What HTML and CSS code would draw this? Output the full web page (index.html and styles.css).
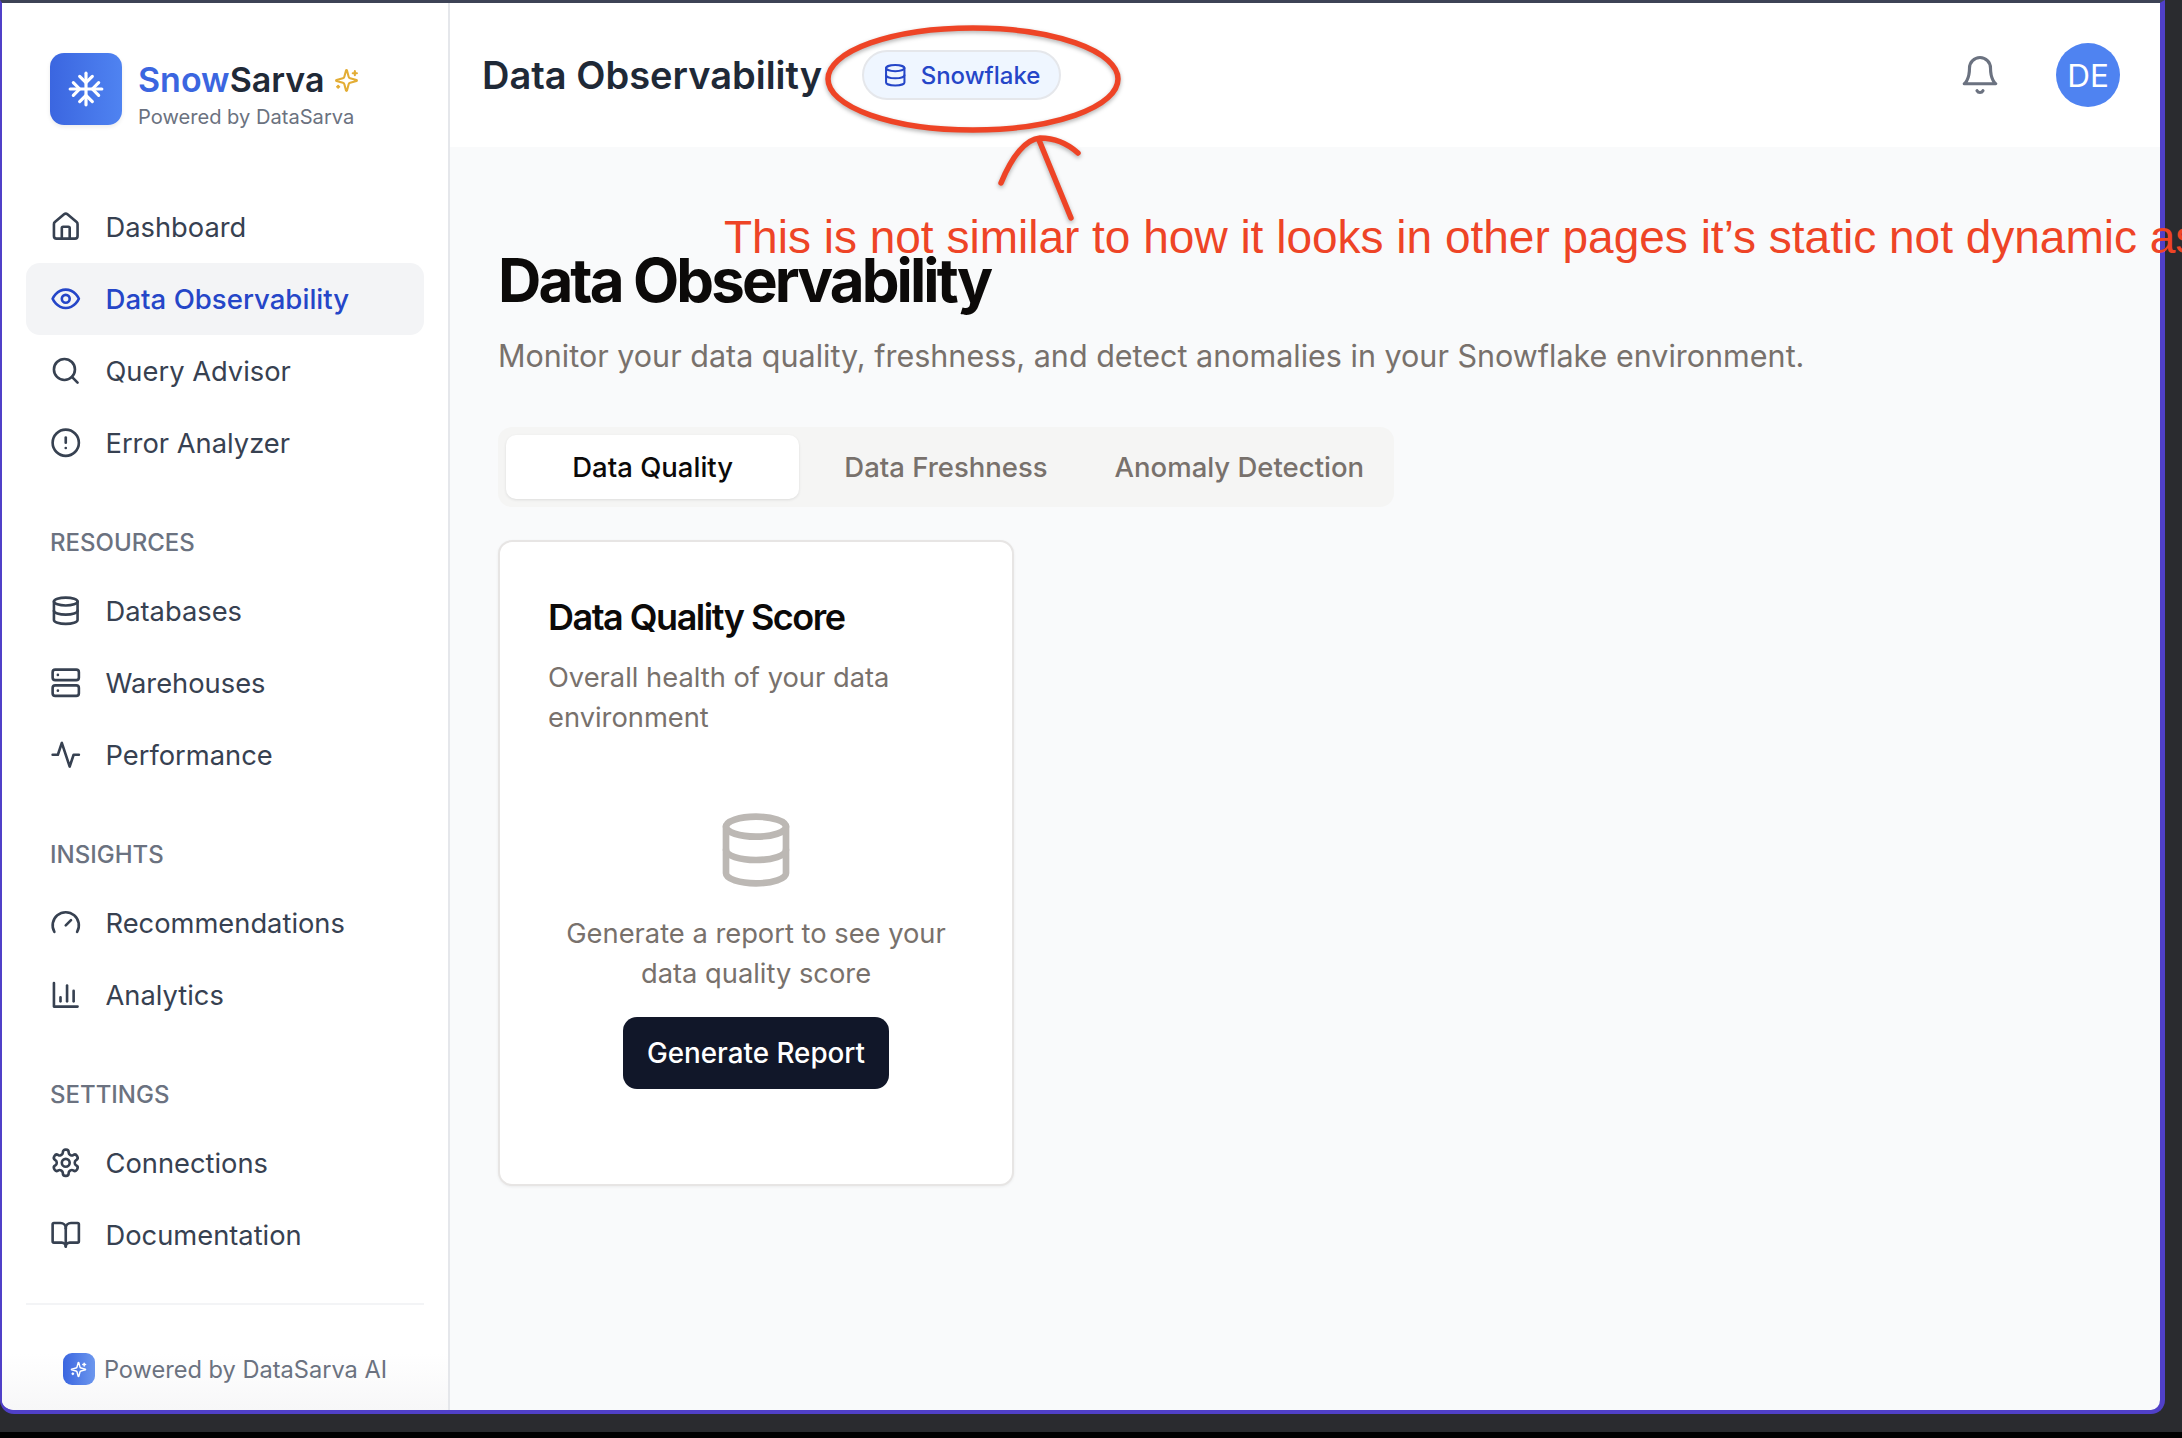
FILE: index.html
```html
<!DOCTYPE html>
<html lang="en">
<head>
    <meta charset="UTF-8">
    <meta name="viewport" content="width=device-width, initial-scale=1.0">
    <title>Data Observability - SnowSarva</title>
    <link rel="stylesheet" href="styles.css">
</head>
<body>
    <svg class="sprites" width="0" height="0">
        <symbol id="i-home" viewBox="0 0 24 24"><path d="M15 21v-8a1 1 0 0 0-1-1h-4a1 1 0 0 0-1 1v8"/><path d="M3 10a2 2 0 0 1 .709-1.528l7-5.999a2 2 0 0 1 2.582 0l7 5.999A2 2 0 0 1 21 10v9a2 2 0 0 1-2 2H5a2 2 0 0 1-2-2z"/></symbol>
        <symbol id="i-eye" viewBox="0 0 24 24"><path d="M2 12s3-7 10-7 10 7 10 7-3 7-10 7-10-7-10-7Z"/><circle cx="12" cy="12" r="3"/></symbol>
        <symbol id="i-search" viewBox="0 0 24 24"><circle cx="11" cy="11" r="8"/><path d="m21 21-4.3-4.3"/></symbol>
        <symbol id="i-alert" viewBox="0 0 24 24"><circle cx="12" cy="12" r="10"/><path d="M12 8v4"/><path d="M12 16h.01"/></symbol>
        <symbol id="i-db" viewBox="0 0 24 24"><ellipse cx="12" cy="5" rx="9" ry="3"/><path d="M3 5V19A9 3 0 0 0 21 19V5"/><path d="M3 12A9 3 0 0 0 21 12"/></symbol>
        <symbol id="i-server" viewBox="0 0 24 24"><rect x="2" y="2" width="20" height="8" rx="2"/><rect x="2" y="14" width="20" height="8" rx="2"/><path d="M6 6h.01"/><path d="M6 18h.01"/></symbol>
        <symbol id="i-activity" viewBox="0 0 24 24"><path d="M22 12h-4l-3 9L9 3l-3 9H2"/></symbol>
        <symbol id="i-gauge" viewBox="0 0 24 24"><path d="m12 14 4-4"/><path d="M3.34 19a10 10 0 1 1 17.32 0"/></symbol>
        <symbol id="i-chart" viewBox="0 0 24 24"><path d="M3 3v18h18"/><path d="M18 17V9"/><path d="M13 17V5"/><path d="M8 17v-3"/></symbol>
        <symbol id="i-gear" viewBox="0 0 24 24"><path d="M12.22 2h-.44a2 2 0 0 0-2 2v.18a2 2 0 0 1-1 1.73l-.43.25a2 2 0 0 1-2 0l-.15-.08a2 2 0 0 0-2.73.73l-.22.38a2 2 0 0 0 .73 2.73l.15.1a2 2 0 0 1 1 1.72v.51a2 2 0 0 1-1 1.74l-.15.09a2 2 0 0 0-.73 2.73l.22.38a2 2 0 0 0 2.73.73l.15-.08a2 2 0 0 1 2 0l.43.25a2 2 0 0 1 1 1.73V20a2 2 0 0 0 2 2h.44a2 2 0 0 0 2-2v-.18a2 2 0 0 1 1-1.73l.43-.25a2 2 0 0 1 2 0l.15.08a2 2 0 0 0 2.73-.73l.22-.39a2 2 0 0 0-.73-2.73l-.15-.08a2 2 0 0 1-1-1.74v-.5a2 2 0 0 1 1-1.74l.15-.09a2 2 0 0 0 .73-2.73l-.22-.38a2 2 0 0 0-2.73-.73l-.15.08a2 2 0 0 1-2 0l-.43-.25a2 2 0 0 1-1-1.73V4a2 2 0 0 0-2-2z"/><circle cx="12" cy="12" r="3"/></symbol>
        <symbol id="i-book" viewBox="0 0 24 24"><path d="M12 7v14"/><path d="M3 18a1 1 0 0 1-1-1V4a1 1 0 0 1 1-1h5a4 4 0 0 1 4 4 4 4 0 0 1 4-4h5a1 1 0 0 1 1 1v13a1 1 0 0 1-1 1h-6a3 3 0 0 0-3 3 3 3 0 0 0-3-3z"/></symbol>
        <symbol id="i-bell" viewBox="0 0 24 24"><path d="M6 8a6 6 0 0 1 12 0c0 7 3 9 3 9H3s3-2 3-9"/><path d="M10.3 21a1.94 1.94 0 0 0 3.4 0"/></symbol>
        <symbol id="i-snow" viewBox="0 0 24 24"><path d="M2 12h20"/><path d="M12 2v20"/><path d="m20 16-4-4 4-4"/><path d="m4 8 4 4-4 4"/><path d="m16 4-4 4-4-4"/><path d="m8 20 4-4 4 4"/></symbol>
        <symbol id="i-sparkles" viewBox="0 0 24 24"><path d="M9.937 15.5A2 2 0 0 0 8.5 14.063l-6.135-1.582a.5.5 0 0 1 0-.962L8.5 9.936A2 2 0 0 0 9.937 8.5l1.582-6.135a.5.5 0 0 1 .963 0L14.063 8.5A2 2 0 0 0 15.5 9.937l6.135 1.581a.5.5 0 0 1 0 .964L15.5 14.063a2 2 0 0 0-1.437 1.437l-1.582 6.135a.5.5 0 0 1-.963 0z"/><path d="M20 3v4"/><path d="M22 5h-4"/><path d="M4 17v2"/><path d="M5 18H3"/></symbol>
    </svg>

    <div class="desk">
        <div class="window">
            <aside class="sidebar">
                <div class="brand">
                    <div class="logo"><svg class="icon logo-icon"><use href="#i-snow"/></svg></div>
                    <div class="brand-text">
                        <div class="brand-name"><span class="snow">Snow</span>Sarva<svg class="icon brand-spark"><use href="#i-sparkles"/></svg></div>
                        <div class="brand-sub">Powered by DataSarva</div>
                    </div>
                </div>
                <nav class="nav">
                    <div class="nav-group">
                        <a class="nav-item"><svg class="icon"><use href="#i-home"/></svg>Dashboard</a>
                        <a class="nav-item active"><svg class="icon"><use href="#i-eye"/></svg>Data Observability</a>
                        <a class="nav-item"><svg class="icon"><use href="#i-search"/></svg>Query Advisor</a>
                        <a class="nav-item"><svg class="icon"><use href="#i-alert"/></svg>Error Analyzer</a>
                    </div>
                    <div class="nav-group">
                        <div class="nav-label">RESOURCES</div>
                        <a class="nav-item"><svg class="icon"><use href="#i-db"/></svg>Databases</a>
                        <a class="nav-item"><svg class="icon"><use href="#i-server"/></svg>Warehouses</a>
                        <a class="nav-item"><svg class="icon"><use href="#i-activity"/></svg>Performance</a>
                    </div>
                    <div class="nav-group">
                        <div class="nav-label">INSIGHTS</div>
                        <a class="nav-item"><svg class="icon"><use href="#i-gauge"/></svg>Recommendations</a>
                        <a class="nav-item"><svg class="icon"><use href="#i-chart"/></svg>Analytics</a>
                    </div>
                    <div class="nav-group">
                        <div class="nav-label">SETTINGS</div>
                        <a class="nav-item"><svg class="icon"><use href="#i-gear"/></svg>Connections</a>
                        <a class="nav-item"><svg class="icon"><use href="#i-book"/></svg>Documentation</a>
                    </div>
                </nav>
                <div class="side-footer">
                    <span class="foot-logo"><svg class="icon foot-spark"><use href="#i-sparkles"/></svg></span>
                    Powered by DataSarva AI
                </div>
            </aside>
            <div class="main">
                <header class="topbar">
                    <div class="topbar-title">Data Observability</div>
                    <div class="badge"><svg class="icon badge-icon"><use href="#i-db"/></svg>Snowflake</div>
                    <svg class="icon bell"><use href="#i-bell"/></svg>
                    <div class="avatar">DE</div>
                </header>
                <main class="content">
                    <h1>Data Observability</h1>
                    <p class="lead">Monitor your data quality, freshness, and detect anomalies in your Snowflake environment.</p>
                    <div class="tabs">
                        <div class="tab selected">Data Quality</div>
                        <div class="tab">Data Freshness</div>
                        <div class="tab">Anomaly Detection</div>
                    </div>
                    <section class="card">
                        <h2>Data Quality Score</h2>
                        <p class="card-desc">Overall health of your data environment</p>
                        <div class="empty">
                            <svg class="icon empty-icon"><use href="#i-db"/></svg>
                            <p>Generate a report to see your data quality score</p>
                            <button class="generate">Generate Report</button>
                        </div>
                    </section>
                </main>
            </div>
        </div>
    </div>

    <!-- markup drawn on top of the screenshot -->
    <svg class="scribble" width="2182" height="240" viewBox="0 0 2182 240">
        <ellipse cx="973" cy="79" rx="145" ry="51"/>
        <path d="M1001 183C1012 156 1026 139 1040 138C1054 138 1068 144 1078 153"/>
        <path d="M1039 140L1071 218"/>
    </svg>
    <div class="note">This is not similar to how it looks in other pages it’s static not dynamic as</div>
</body>
</html>
```

FILE: styles.css
```css
* {
    box-sizing: border-box;
    margin: 0;
    padding: 0;
}
html, body {
    width: 2182px;
    height: 1438px;
    overflow: hidden;
}
body {
    position: relative;
    background: #000;
    font-family: Inter, "Liberation Sans", sans-serif;
}
.sprites {
    position: absolute;
}
.icon {
    width: 31.5px;
    height: 31.5px;
    fill: none;
    stroke: currentColor;
    stroke-width: 2;
    stroke-linecap: round;
    stroke-linejoin: round;
    flex-shrink: 0;
}

.desk {
    height: 1432px;
    background: #2a2b2f;
}
.window {
    display: flex;
    width: 2165px;
    height: 1414px;
    border-style: solid;
    border-color: #3d4356 #5040c8 #5040c8 #5040c8;
    border-width: 3px 5px 4px 2px;
    border-radius: 0 0 14px 14px;
    overflow: hidden;
    background: #f9fafb;
}

.sidebar {
    width: 448px;
    flex-shrink: 0;
    display: flex;
    flex-direction: column;
    background: linear-gradient(180deg, #fff 96%, #f7f7f8);
    border-right: 2px solid #e5e7eb;
    padding: 0 24px;
}
.brand {
    display: flex;
    align-items: flex-start;
    gap: 16px;
    height: 172px;
    flex-shrink: 0;
    padding: 50px 0 0 24px;
}
.logo {
    width: 72px;
    height: 72px;
    border-radius: 14px;
    background: linear-gradient(90deg, #3b66e0, #4f83f1);
    box-shadow: 0 2px 4px rgba(0, 0, 0, 0.08);
    display: flex;
    align-items: center;
    justify-content: center;
    color: #fff;
}
.logo-icon {
    width: 38px;
    height: 38px;
}
.brand-text {
    padding-top: 5px;
}
.brand-name {
    display: flex;
    align-items: center;
    font-size: 34px;
    line-height: 44px;
    font-weight: 600;
    color: #1f2937;
}
.snow {
    color: #3b66e0;
}
.brand-spark {
    width: 25px;
    height: 25px;
    margin-left: 9px;
    color: #e3ad35;
}
.brand-sub {
    margin-top: 1px;
    font-size: 20.1px;
    line-height: 28px;
    color: #6b7280;
}

.nav {
    flex: 1;
    min-height: 0;
    padding-top: 16px;
}
.nav-group {
    margin-bottom: 42px;
}
.nav-group:last-child {
    margin-bottom: 0;
}
.nav-label {
    height: 44px;
    padding-left: 24px;
    font-size: 24px;
    line-height: 44px;
    font-weight: 500;
    color: #6b7280;
    margin-bottom: 10px;
}
.nav-item {
    display: flex;
    align-items: center;
    gap: 24px;
    height: 72px;
    padding-left: 24px;
    border-radius: 14px;
    font-size: 27.3px;
    color: #374151;
}
.nav-item.active {
    background: #f3f4f6;
    color: #2546c8;
    font-size: 27.6px;
    font-weight: 500;
}

.side-footer {
    display: flex;
    align-items: center;
    justify-content: center;
    flex-shrink: 0;
    gap: 9px;
    height: 107px;
    padding-top: 23px;
    border-top: 2px solid #f3f4f6;
    font-size: 23.6px;
    color: #6b7280;
}
.foot-logo {
    width: 32px;
    height: 32px;
    border-radius: 9px;
    background: linear-gradient(90deg, #3b66e0, #6c97ee);
    color: #fff;
    display: flex;
    align-items: center;
    justify-content: center;
}
.foot-spark {
    width: 17px;
    height: 17px;
}

.main {
    flex: 1;
    min-width: 0;
    display: flex;
    flex-direction: column;
}
.topbar {
    height: 144px;
    flex-shrink: 0;
    display: flex;
    align-items: center;
    background: #fff;
    padding: 0 40px 0 32px;
}
.topbar-title {
    font-size: 38px;
    font-weight: 600;
    color: #1f2937;
}
.badge {
    display: flex;
    align-items: center;
    gap: 13px;
    height: 50px;
    margin-left: 40px;
    padding: 0 19px;
    border: 2px solid #e5e7eb;
    border-radius: 25px;
    background: #eff6ff;
    color: #2546c8;
    font-size: 24px;
    font-weight: 500;
}
.badge-icon {
    width: 24.5px;
    height: 24.5px;
}
.bell {
    width: 42px;
    height: 42px;
    margin-left: auto;
    color: #6b7280;
    stroke-width: 1.8;
}
.avatar {
    width: 64px;
    height: 64px;
    margin-left: 55px;
    border-radius: 50%;
    background: #4f83f1;
    color: #fff;
    font-size: 31.5px;
    display: flex;
    align-items: center;
    justify-content: center;
}

.content {
    padding: 98px 48px 0;
    color: #0c0a09;
}
h1 {
    font-size: 60px;
    line-height: 70px;
    font-weight: 700;
    letter-spacing: -2.9px;
}
.lead {
    margin-top: 19px;
    font-size: 30.5px;
    line-height: 44px;
    color: #78716c;
}
.tabs {
    display: grid;
    grid-template-columns: repeat(3, 1fr);
    align-items: center;
    width: 896px;
    height: 80px;
    margin-top: 49px;
    padding: 0 8px;
    border-radius: 14px;
    background: #f5f5f4;
}
.tab {
    height: 64px;
    border-radius: 10px;
    font-size: 27.5px;
    font-weight: 500;
    line-height: 64px;
    text-align: center;
    color: #78716c;
}
.tab.selected {
    background: #fff;
    color: #0c0a09;
    box-shadow: 0 1px 3px rgba(0, 0, 0, 0.1);
}
.card {
    width: 516px;
    height: 646px;
    margin-top: 33px;
    padding: 54px 48px 0;
    border: 2px solid #e7e5e4;
    border-radius: 14px;
    background: #fff;
    box-shadow: 0 1px 3px rgba(0, 0, 0, 0.06);
}
h2 {
    font-size: 36px;
    line-height: 42px;
    font-weight: 600;
    letter-spacing: -1.5px;
}
.card-desc {
    margin-top: 20px;
    font-size: 27.3px;
    line-height: 40px;
    color: #78716c;
}
.empty {
    display: flex;
    flex-direction: column;
    align-items: center;
    margin-top: 72px;
    text-align: center;
    color: #78716c;
    font-size: 27.3px;
    line-height: 40px;
}
.empty-icon {
    width: 80px;
    height: 80px;
    color: #bcb8b4;
}
.empty p {
    margin-top: 24px;
}
.generate {
    width: 266px;
    height: 72px;
    margin-top: 23px;
    border: none;
    border-radius: 14px;
    background: #111729;
    color: #fff;
    font-family: inherit;
    font-size: 27.8px;
    font-weight: 500;
}

.scribble {
    position: absolute;
    left: 0;
    top: 0;
    fill: none;
    stroke: #ee4426;
    stroke-width: 5.5;
    stroke-linecap: round;
    filter: drop-shadow(0 2px 2px rgba(0, 0, 0, 0.3));
}
.note {
    position: absolute;
    left: 724px;
    top: 209px;
    white-space: nowrap;
    font-family: "Liberation Sans", Arial, sans-serif;
    font-size: 46px;
    line-height: 56px;
    color: #ee4426;
}
```
